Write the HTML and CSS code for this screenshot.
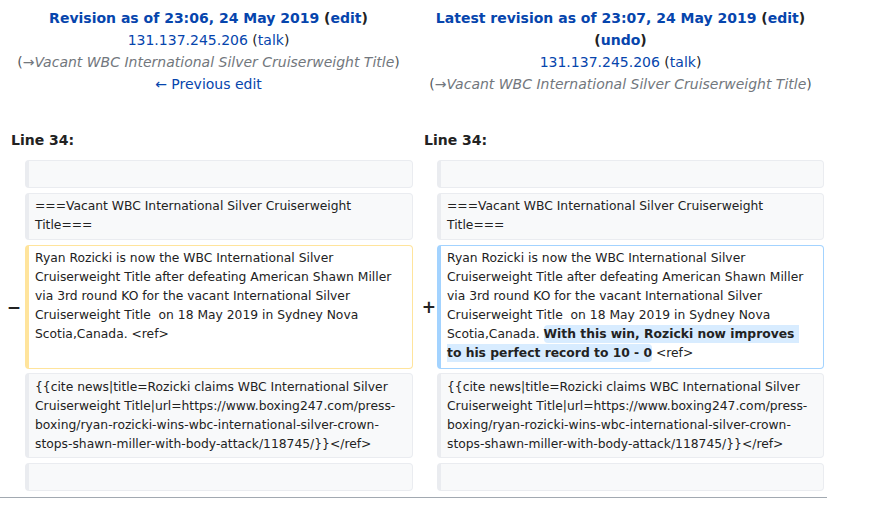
FILE: index.html
```html
<!DOCTYPE html>
<html lang="en">
<head>
<meta charset="utf-8">
<title>Diff</title>
<link rel="stylesheet" href="styles.css">
</head>
<body>
<div class="diff">
  <div class="title">
    <div class="rev"><a href="#">Revision as of 23:06, 24 May 2019</a> (<a href="#">edit</a>)</div>
    <div><a href="#">131.137.245.206</a> (<a href="#">talk</a>)</div>
    <div class="comment">(<span class="arrow">→</span><i>Vacant WBC International Silver Cruiserweight Title</i>)</div>
    <div><a href="#">← Previous edit</a></div>
  </div>
  <div class="title">
    <div class="rev"><a href="#">Latest revision as of 23:07, 24 May 2019</a> (<a href="#">edit</a>)</div>
    <div class="rev">(<a href="#">undo</a>)</div>
    <div><a href="#">131.137.245.206</a> (<a href="#">talk</a>)</div>
    <div class="comment">(<span class="arrow">→</span><i>Vacant WBC International Silver Cruiserweight Title</i>)</div>
    <div>&nbsp;</div>
  </div>

  <div class="lineno">Line 34:</div>
  <div class="lineno">Line 34:</div>

  <div class="marker"></div>
  <div class="line context"><br></div>
  <div class="marker"></div>
  <div class="line context"><br></div>

  <div class="marker"></div>
  <div class="line context">===Vacant WBC International Silver Cruiserweight Title===</div>
  <div class="marker"></div>
  <div class="line context">===Vacant WBC International Silver Cruiserweight Title===</div>

  <div class="marker mid">−</div>
  <div class="line deleted tall">Ryan Rozicki is now the WBC International Silver Cruiserweight Title after defeating American Shawn Miller via 3rd round KO for the vacant International Silver Cruiserweight Title  on 18 May 2019 in Sydney Nova Scotia,Canada. &lt;ref&gt;</div>
  <div class="marker mid plus">+</div>
  <div class="line added tall">Ryan Rozicki is now the WBC International Silver Cruiserweight Title after defeating American Shawn Miller via 3rd round KO for the vacant International Silver Cruiserweight Title  on 18 May 2019 in Sydney Nova Scotia,Canada. <ins class="change">With this win, Rozicki now improves to his perfect record to 10 - 0</ins> &lt;ref&gt;</div>

  <div class="marker"></div>
  <div class="line context">{{cite news|title=Rozicki claims WBC International Silver Cruiserweight Title|url=https://www.boxing247.com/press-boxing/ryan-rozicki-wins-wbc-international-silver-crown-stops-shawn-miller-with-body-attack/118745/}}&lt;/ref&gt;</div>
  <div class="marker"></div>
  <div class="line context">{{cite news|title=Rozicki claims WBC International Silver Cruiserweight Title|url=https://www.boxing247.com/press-boxing/ryan-rozicki-wins-wbc-international-silver-crown-stops-shawn-miller-with-body-attack/118745/}}&lt;/ref&gt;</div>

  <div class="marker"></div>
  <div class="line context"><br></div>
  <div class="marker"></div>
  <div class="line context"><br></div>
</div>
<div class="rule"></div>
</body>
</html>
```

FILE: styles.css
```css
html, body {
  margin: 0;
  padding: 0;
  background: #ffffff;
}
body {
  font-family: "DejaVu Sans", sans-serif;
  font-size: 14px;
  color: #222222;
}
a {
  color: #0645ad;
  text-decoration: none;
}
.diff {
  display: grid;
  grid-template-columns: 17px 388px 16px 387px;
  column-gap: 4px;
  row-gap: 4.75px;
  padding: 0 4px;
  width: 820px;
}
.title {
  grid-column: span 2;
  text-align: center;
  line-height: 22px;
  padding: 7px 0 3px;
}
.rev {
  font-weight: bold;
}
.comment {
  color: #54595d;
}
.comment i {
  color: #72777d;
}
.arrow {
  color: #72777d;
}
.lineno {
  grid-column: span 2;
  font-weight: bold;
  line-height: 22px;
  padding: 4.25px 7px;
}
.marker {
  font-weight: bold;
  font-size: 17px;
  text-align: right;
}
.marker.mid {
  align-self: center;
}
.marker.plus {
  margin-right: -3px;
}
.line {
  font-size: 12.32px;
  line-height: 19px;
  white-space: pre-wrap;
  word-wrap: break-word;
  border-style: solid;
  border-width: 1px 1px 1px 4px;
  border-radius: 4px;
  padding: 3.5px 12px 3.5px 6px;
}
.line.tall {
  padding-bottom: 4.5px;
}
.context {
  background: #f8f9fa;
  border-color: #eaecf0;
  color: #222222;
}
.deleted {
  border-color: #ffe49c;
}
.added {
  border-color: #a3d3ff;
}
.change {
  text-decoration: none;
  font-weight: bold;
  background: #d8ecff;
  border-radius: 4px;
  padding: 2px 0;
}
.rule {
  width: 827px;
  border-bottom: 1px solid #a2a9b1;
  margin-top: 6px;
}
```
